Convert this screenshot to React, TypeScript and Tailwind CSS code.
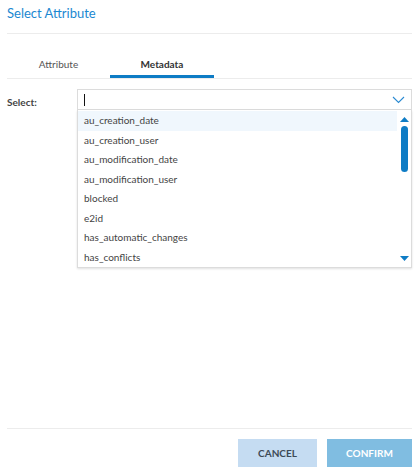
const ITEMS = [
  'au_creation_date',
  'au_creation_user',
  'au_modification_date',
  'au_modification_user',
  'blocked',
  'e2id',
  'has_automatic_changes',
  'has_conflicts',
];

export default function App() {
  return (
    <div className="w-[419px] h-[473px] bg-white flex flex-col px-[7px] font-['Lato',sans-serif] text-[#333]">
      <div className="h-[34px] flex items-center border-b border-[#ececec]">
        <h1 className="text-[13px] text-[#1b88d1] -mt-[6px]">Select Attribute</h1>
      </div>

      {/* Tabs */}
      <div className="mt-[16px] flex border-b border-[#ececec] h-[29px]">
        <div className="w-[103px] flex items-start justify-center pt-[7px] text-[10px] text-[#555]">Attribute</div>
        <div className="w-[104px] flex items-start justify-center pt-[7px] text-[10px] font-bold text-[#333] border-b-[3px] border-[#0e7cc5]">
          Metadata
        </div>
      </div>

      {/* Select row */}
      <div className="mt-[10px] flex">
        <div className="w-[70px] pt-[6px] text-[10px] font-bold text-[#444]">Select:</div>
        <div className="flex-1 flex flex-col">
          <div className="h-[21px] border border-[#dcdcdc] flex items-center pl-[6px] pr-[6px]">
            <span className="w-px h-[12px] bg-[#111]" />
            <svg className="ml-auto" width="13" height="8" viewBox="0 0 13 8">
              <path d="M1 1 L6.5 6.5 L12 1" fill="none" stroke="#2a8ad2" strokeWidth="1.1" />
            </svg>
          </div>
          <div className="h-[158px] border border-t-0 border-[#dcdcdc] shadow-[0_1px_2px_rgba(0,0,0,0.12)] flex">
            <div className="flex-1 flex flex-col pt-px">
              {ITEMS.map((it, i) => (
                <div
                  key={it}
                  className={`h-[19.5px] flex items-center pl-[6px] text-[10px] text-[#444] ${i === 0 ? 'bg-[#f0f7fd]' : ''}`}
                >
                  {it}
                </div>
              ))}
            </div>
            <div className="w-[14px] flex flex-col items-center pt-[7px] pb-[6px]">
              <svg width="9" height="5" viewBox="0 0 9 5"><path d="M0 5 L4.5 0 L9 5 Z" fill="#0e7cc5" /></svg>
              <div className="mt-[4px] w-[7px] h-[46px] rounded-full bg-[#0e7cc5]" />
              <svg className="mt-auto" width="9" height="5" viewBox="0 0 9 5"><path d="M0 0 L4.5 5 L9 0 Z" fill="#0e7cc5" /></svg>
            </div>
          </div>
        </div>
      </div>

      <div className="flex-1" />

      {/* Footer */}
      <div className="border-t border-[#ececec] h-[45px] flex items-start justify-end gap-[10px] pt-[10px]">
        <button className="w-[79px] h-[28px] bg-[#c5dcf2] text-[10px] font-bold text-[#3d4a57]">CANCEL</button>
        <button className="w-[85px] h-[28px] bg-[#80bde1] text-[10px] font-bold text-white">CONFIRM</button>
      </div>
    </div>
  );
}
